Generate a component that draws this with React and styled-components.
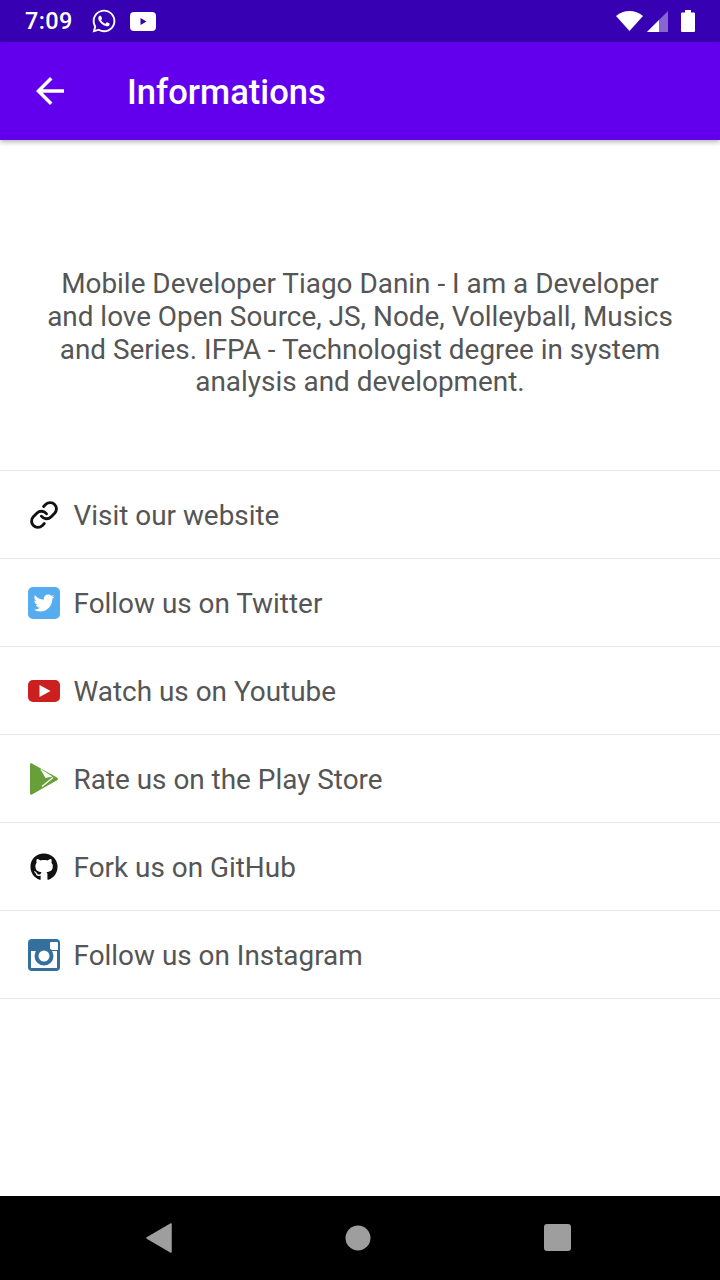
import React from 'react';
import styled, { createGlobalStyle } from 'styled-components';
import { FaWhatsapp, FaGithub } from 'react-icons/fa';
import { MdArrowBack } from 'react-icons/md';
import { Link as LinkIcon } from 'lucide-react';

const GlobalStyle = createGlobalStyle`
  html, body { margin: 0; padding: 0; background: #fff; }
  #root { width: 720px; height: 1280px; }
`;

const Screen = styled.div`
  width: 720px;
  height: 1280px;
  display: flex;
  flex-direction: column;
  overflow: hidden;
  background: #fff;
  font-family: Roboto, "Liberation Sans", sans-serif;
`;

const StatusBar = styled.div`
  height: 42px;
  flex: none;
  background: #3700b3;
  display: flex;
  align-items: center;
  justify-content: space-between;
  padding: 0 25px;
  color: #fff;
`;

const StatusGroup = styled.div`
  display: flex;
  align-items: center;
  gap: ${(p) => p.$gap || 0}px;
`;

const Clock = styled.span`
  font-size: 23.5px;
  font-weight: 500;
  margin-right: 5px;
  letter-spacing: 0.4px;
`;

const BatterySlot = styled.span`
  display: flex;
  margin-left: 9px;
`;

const AppBar = styled.header`
  height: 98px;
  flex: none;
  background: #6200ee;
  display: flex;
  align-items: center;
  padding-left: 29px;
  color: #fff;
  box-shadow: 0 2px 5px rgba(0, 0, 0, 0.3);
  position: relative;
  z-index: 1;
`;

const BackIcon = styled(MdArrowBack)`
  font-size: 42px;
  flex: none;
`;

const Title = styled.h1`
  margin: 2px 0 0 56px;
  font-size: 34.6px;
  font-weight: 500;
`;

const Main = styled.main`
  flex: 1;
  min-height: 0;
`;

const Intro = styled.p`
  box-sizing: border-box;
  height: 330px;
  margin: 0;
  padding: 128px 42px 0;
  text-align: center;
  font-size: 27.9px;
  line-height: 32.8px;
  color: #555;
`;

const LinkList = styled.ul`
  list-style: none;
  margin: 0;
  padding: 0;
  border-top: 1px solid #e6e6e6;
`;

const Row = styled.li`
  box-sizing: border-box;
  height: 88px;
  display: flex;
  align-items: center;
  padding-left: 28px;
  border-bottom: 1px solid #e6e6e6;
`;

const IconSlot = styled.span`
  width: 32px;
  height: 32px;
  flex: none;
  display: flex;
  align-items: center;
  justify-content: center;
  color: #111;
`;

const Label = styled.span`
  margin: 2px 0 0 13.5px;
  font-size: 27.9px;
  color: #555;
`;

const NavBar = styled.nav`
  height: 84px;
  flex: none;
  background: #000;
  display: flex;
  align-items: center;
  justify-content: space-between;
  padding: 0 148px 0 146px;
`;

const YoutubeBadge = () => (
  <svg width="26" height="19" viewBox="0 0 26 19">
    <rect width="26" height="19" rx="4" fill="#fff" />
    <path d="M10.5 6l6 3.500-6 3.500z" fill="#3700b3" />
  </svg>
);

const WifiIcon = () => (
  <svg width="27" height="20" viewBox="0 0 27 20">
    <path d="M13.500 20L0 5c8-6.600 19-6.600 27 0z" fill="#fff" />
  </svg>
);

const SignalIcon = () => (
  <svg width="21" height="21" viewBox="0 0 21 21">
    <path d="M21 0v21H0z" fill="#fff" fillOpacity="0.4" />
    <path d="M12 9V21H0z" fill="#fff" />
  </svg>
);

const BatteryIcon = () => (
  <svg width="14" height="22" viewBox="0 0 14 22">
    <path d="M4 0h6v2.500h3a1 1 0 0 1 1 1V21a1 1 0 0 1-1 1H1a1 1 0 0 1-1-1V3.500a1 1 0 0 1 1-1h3z" fill="#fff" />
  </svg>
);

const TwitterTile = () => (
  <svg width="32" height="32" viewBox="0 0 32 32">
    <rect width="32" height="32" rx="5" fill="#55acee" />
    <g transform="translate(5.500 5.500) scale(0.0410)">
      <path fill="#fff" d="M459.370 151.716c.325 4.548.325 9.097.325 13.645 0 138.720-105.583 298.558-298.558 298.558-59.452 0-114.680-17.219-161.137-47.106 8.447.974 16.568 1.299 25.340 1.299 49.055 0 94.213-16.568 130.274-44.832-46.132-.975-84.792-31.188-98.112-72.772 6.498.974 12.995 1.624 19.818 1.624 9.421 0 18.843-1.300 27.614-3.573-48.081-9.747-84.143-51.980-84.143-102.985v-1.299c13.969 7.797 30.214 12.670 47.431 13.319-28.264-18.843-46.781-51.005-46.781-87.391 0-19.492 5.197-37.360 14.294-52.954 51.655 63.675 129.300 105.258 216.365 109.807-1.624-7.797-2.599-15.918-2.599-24.040 0-57.828 46.782-104.934 104.934-104.934 30.213 0 57.502 12.670 76.670 33.137 23.715-4.548 46.456-13.320 66.599-25.340-7.798 24.366-24.366 44.833-46.132 57.827 21.117-2.273 41.584-8.122 60.426-16.243-14.292 20.791-32.161 39.308-52.628 54.253z" />
    </g>
  </svg>
);

const YoutubeTile = () => (
  <svg width="32" height="22" viewBox="0 0 32 22">
    <rect width="32" height="22" rx="5" fill="#cc1f1f" />
    <path d="M11.500 5l11 6-11 6z" fill="#fff" />
  </svg>
);

const PlayTile = () => (
  <svg width="28" height="32" viewBox="0 0 28 32">
    <path
      fill="#689f38"
      d="M2 .5L27 14.500c1.300.8 1.300 2 0 2.800L2 31.500c-1 .5-2 0-2-1.200V1.700C0 .5 1 0 2 .5z"
    />
    <path fill="#fff" d="M10 5.500l12.500 8-7 1.500z" />
    <path fill="none" stroke="#fff" strokeWidth="1.200" d="M23 14.500L12 23.500" />
  </svg>
);

const InstagramTile = () => (
  <svg width="32" height="32" viewBox="0 0 32 32">
    <rect width="32" height="32" rx="4" fill="#33709c" />
    <rect x="3" y="12" width="26" height="17" fill="#fff" />
    <rect x="22" y="3" width="8" height="8" rx="1" fill="#fff" />
    <circle cx="16" cy="17" r="9.500" fill="#33709c" />
    <circle cx="16" cy="17" r="5.500" fill="#fff" />
  </svg>
);

const links = [
  { label: 'Visit our website', icon: <LinkIcon size={30} strokeWidth={2.3} /> },
  { label: 'Follow us on Twitter', icon: <TwitterTile /> },
  { label: 'Watch us on Youtube', icon: <YoutubeTile /> },
  { label: 'Rate us on the Play Store', icon: <PlayTile /> },
  { label: 'Fork us on GitHub', icon: <FaGithub size={28} /> },
  { label: 'Follow us on Instagram', icon: <InstagramTile /> },
];

export default function App() {
  return (
    <Screen>
      <GlobalStyle />
      <StatusBar>
        <StatusGroup $gap={13}>
          <Clock>7:09</Clock>
          <FaWhatsapp size={26} />
          <YoutubeBadge />
        </StatusGroup>
        <StatusGroup $gap={4}>
          <WifiIcon />
          <SignalIcon />
          <BatterySlot>
            <BatteryIcon />
          </BatterySlot>
        </StatusGroup>
      </StatusBar>
      <AppBar>
        <BackIcon />
        <Title>Informations</Title>
      </AppBar>
      <Main>
        <Intro>
          Mobile Developer Tiago Danin - I am a Developer and love Open Source, JS, Node,
          Volleyball, Musics and Series. IFPA - Technologist degree in system analysis and
          development.
        </Intro>
        <LinkList>
          {links.map((link) => (
            <Row key={link.label}>
              <IconSlot>{link.icon}</IconSlot>
              <Label>{link.label}</Label>
            </Row>
          ))}
        </LinkList>
      </Main>
      <NavBar>
        <svg width="26" height="30" viewBox="0 0 26 30">
          <path d="M25 1v28L1 15z" fill="#9e9e9e" stroke="#9e9e9e" strokeWidth="1.500" strokeLinejoin="round" />
        </svg>
        <svg width="26" height="26" viewBox="0 0 26 26">
          <circle cx="13" cy="13" r="12.500" fill="#9e9e9e" />
        </svg>
        <svg width="28" height="28" viewBox="0 0 28 28">
          <rect width="27" height="27" rx="3" fill="#9e9e9e" />
        </svg>
      </NavBar>
    </Screen>
  );
}
